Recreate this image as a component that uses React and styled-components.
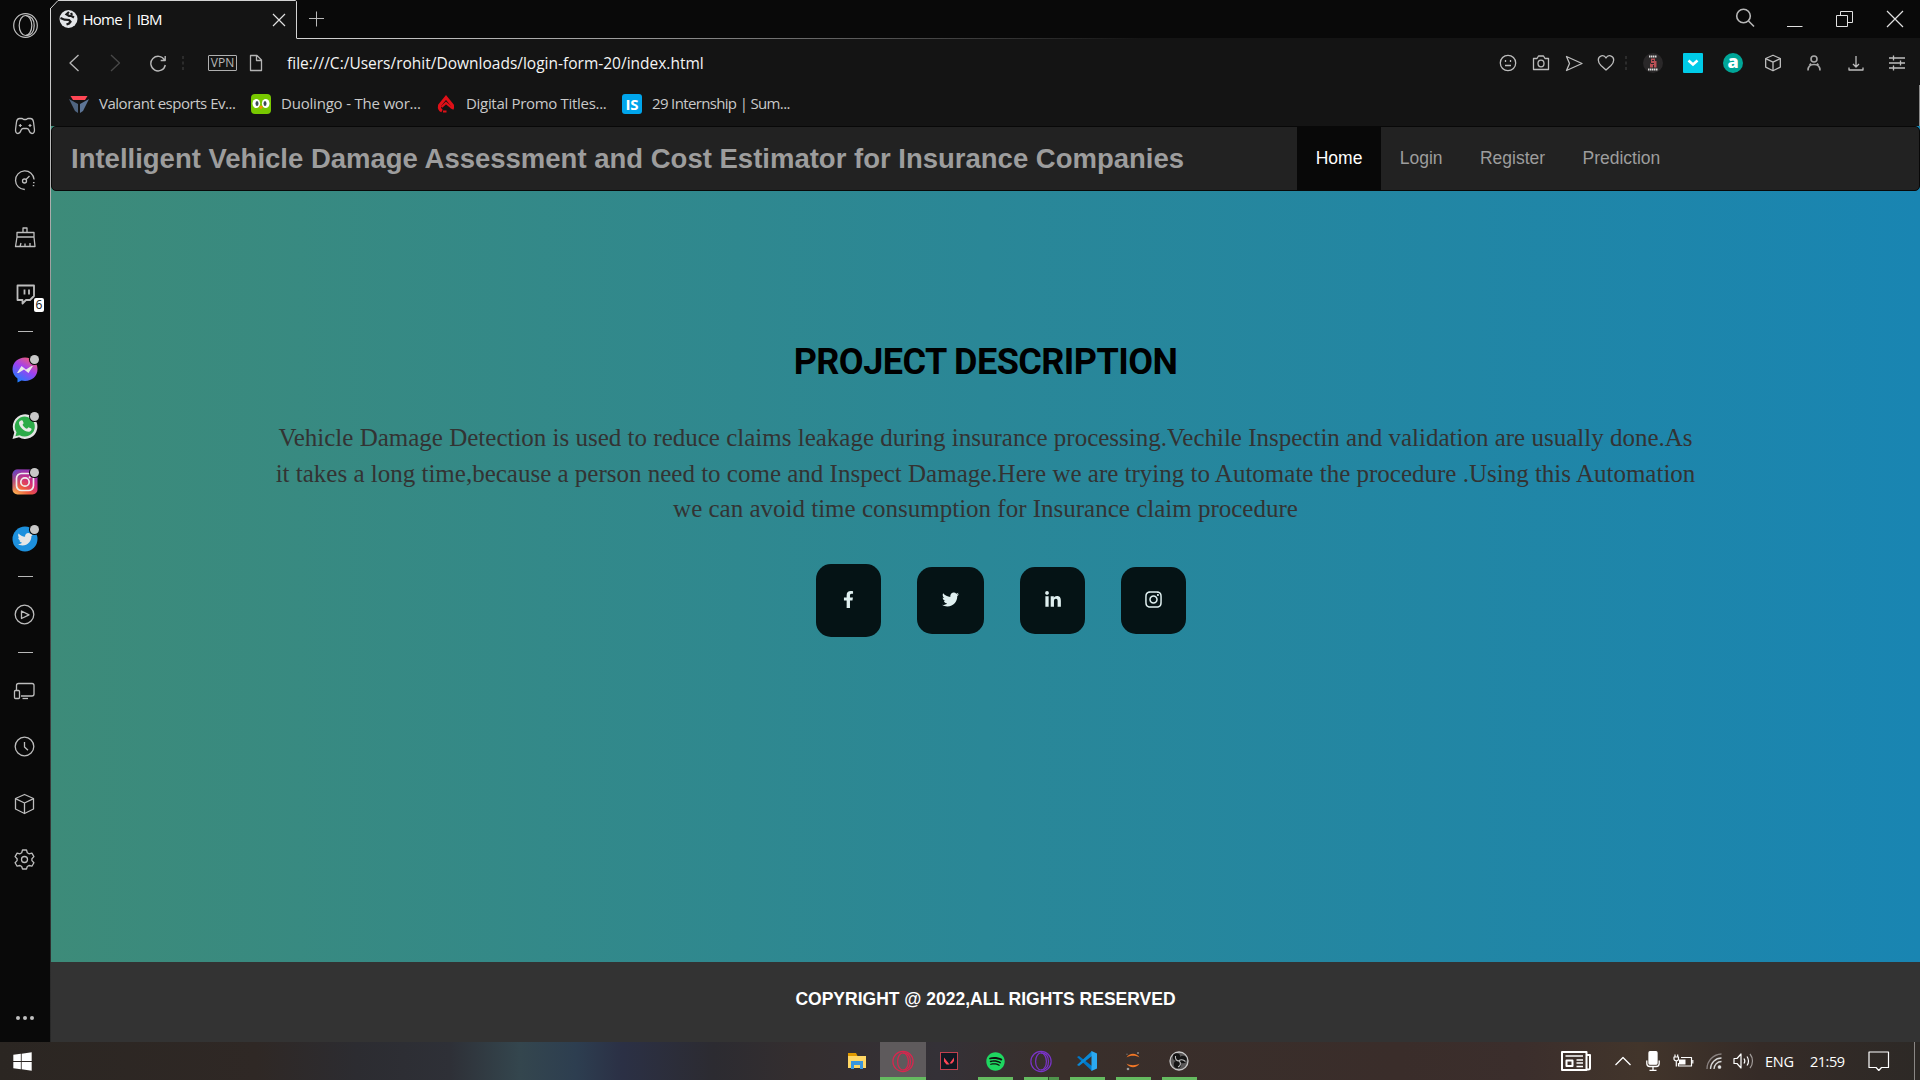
import React from "react";
import styled, { createGlobalStyle } from "styled-components";
import {
  FaFacebookF,
  FaTwitter,
  FaLinkedinIn,
  FaInstagram,
  FaSpotify,
  FaWindows,
} from "react-icons/fa";

const GlobalStyle = createGlobalStyle`
  * { box-sizing: border-box; }
  body { margin: 0; background: #090909; overflow: hidden; }
`;

const ui = `"Open Sans", "Noto Sans", sans-serif`;

const Desktop = styled.div`
  width: 1920px;
  height: 1080px;
  display: flex;
  flex-direction: column;
  overflow: hidden;
  background: #090909;
  font-family: ${ui};
`;

const Browser = styled.div`
  height: 1042px;
  display: flex;
`;

const Sidebar = styled.aside`
  width: 50px;
  flex: none;
  display: flex;
  flex-direction: column;
  align-items: center;
  background: #090909;
`;

const SideItem = styled.div`
  position: relative;
  width: 50px;
  height: 28px;
  flex: none;
  margin-top: ${(p) => p.$gap}px;
  display: flex;
  justify-content: center;
`;

const SideRule = styled.div`
  width: 15px;
  height: 1px;
  flex: none;
  margin: ${(p) => p.$gap}px 0 0 1px;
  background: #b8b8b8;
`;

const Count = styled.span`
  position: absolute;
  left: 34px;
  top: 18px;
  width: 10px;
  height: 14px;
  border-radius: 2px;
  background: #fff;
  color: #111;
  font: 12px/14px ${ui};
  text-align: center;
`;

const Dot = styled.span`
  position: absolute;
  left: 30px;
  top: 0;
  width: 9px;
  height: 9px;
  border-radius: 50%;
  background: #c8c8c8;
  box-shadow: 0 0 0 1px #090909;
`;

const Edge = styled.div`
  width: 1px;
  flex: none;
  margin-top: 8px;
  background: linear-gradient(180deg, #d8d8d8, #a0a0a0 25%, #484848 55%, #282828);
`;

const Main = styled.div`
  flex: 1;
  min-width: 0;
  display: flex;
  flex-direction: column;
`;

const TabStrip = styled.div`
  height: 39px;
  display: flex;
  align-items: stretch;
  background: #090909;
`;

const Tab = styled.div`
  position: relative;
  width: 246px;
  display: flex;
  align-items: center;
  padding: 0 11px 0 8px;
  background: linear-gradient(135deg, #090909 5px, #141414 5px);
`;

const TabOutline = styled.svg`
  position: absolute;
  left: -1px;
  top: 0;
`;

const TabTitle = styled.span`
  flex: 1;
  margin: 0 0 2px 4.5px;
  color: #fff;
  font-size: 15px;
  line-height: 20px;
  letter-spacing: -0.75px;
  word-spacing: 0.5px;
  white-space: nowrap;
`;

const TabRest = styled.div`
  flex: 1;
  display: flex;
  justify-content: space-between;
  padding-left: 12px;
  border-bottom: 1px solid;
  border-image: linear-gradient(90deg, #d4d4d4, #9c9c9c 20%, #4a4a4a 38%, #141414 52%) 1;
`;

const WindowControls = styled.div`
  display: flex;
  gap: 18px;
  padding: 2px 9px 0 0;
`;

const Toolbar = styled.div`
  height: 46px;
  display: flex;
  align-items: center;
  padding: 1px 0 0 12px;
  background: #141414;
`;

const Slot = styled.div`
  width: ${(p) => p.$w}px;
  margin-left: ${(p) => p.$ml || 0}px;
  flex: none;
  display: flex;
  justify-content: center;
  align-items: center;
`;

const Vpn = styled.span`
  width: 29px;
  height: 16px;
  margin: 0 12px 0 15px;
  border: 1px solid #b0b0b0;
  border-radius: 1px;
  color: #b8b8b8;
  font: 12px/14px ${ui};
  text-align: center;
`;

const Address = styled.span`
  flex: 1;
  margin-left: 24px;
  color: #f4f4f4;
  font-size: 15.500px;
  line-height: 20px;
  white-space: nowrap;
`;

const Tools = styled.div`
  display: flex;
  align-items: center;
`;

const Avatar = styled.span`
  width: 20px;
  height: 20px;
  border-radius: 50%;
  background: #2a2829;
  display: flex;
`;

const LetterA = styled.span`
  width: 20px;
  height: 20px;
  border-radius: 50%;
  background: #00a698;
  color: #fff;
  font: 800 18px/16px ${ui};
  text-align: center;
`;

const Bookmarks = styled.div`
  height: 41px;
  display: flex;
  padding: 0 0 3px 18px;
  background: #141414;
  border-right: 1px solid #8a8a8a;
`;

const Bookmark = styled.div`
  width: ${(p) => p.$w}px;
  display: flex;
  align-items: center;
  gap: 10px;
  color: #c9c9c9;
  font-size: 15px;
  letter-spacing: ${(p) => p.$ls}px;
  white-space: nowrap;
`;

const BookmarkName = styled.span`
  line-height: 20px;
  margin-bottom: 2px;
`;

const IsLogo = styled.span`
  width: 20px;
  height: 20px;
  border-radius: 3px;
  background: #00a5ec;
  color: #fff;
  font: 700 15px/20px ${ui};
  letter-spacing: 0;
  text-align: center;
`;

const Page = styled.div`
  flex: 1;
  display: flex;
  flex-direction: column;
  background: linear-gradient(90deg, #3d8b79, #2a8797 50%, #1985b2);
`;

const NavBar = styled.nav`
  height: 65px;
  flex: none;
  display: flex;
  border: 1px solid #080808;
  border-radius: 5px;
  background: #222;
  font-family: "Liberation Sans", Arial, sans-serif;
`;

const Brand = styled.span`
  width: 1245px;
  padding-left: 19px;
  color: #9d9d9d;
  font-weight: 700;
  font-size: 27.5px;
  line-height: 64px;
  white-space: nowrap;
`;

const NavLink = styled.a`
  padding: 0 18.7px;
  background: ${(p) => (p.$active ? "#080808" : "transparent")};
  color: ${(p) => (p.$active ? "#fff" : "#9d9d9d")};
  font-size: 17.5px;
  line-height: 62px;
`;

const Hero = styled.section`
  flex: 1;
  display: flex;
  flex-direction: column;
  align-items: center;
  padding-top: 151px;
`;

const Heading = styled.h1`
  margin: 0;
  color: #000;
  font: 700 36px/40px Roboto, sans-serif;
  letter-spacing: -0.55px;
`;

const Description = styled.p`
  margin: 38px 0 0;
  color: #333;
  font: 25px/35.7px "Liberation Serif", "Times New Roman", serif;
  text-align: center;
  white-space: nowrap;
`;

const Socials = styled.div`
  display: flex;
  align-items: center;
  gap: 36px;
  margin: 37px 0 0 31px;
`;

const Social = styled.a`
  width: ${(p) => p.$w || 65}px;
  height: ${(p) => p.$h || 67}px;
  padding-bottom: 2px;
  display: flex;
  justify-content: center;
  align-items: center;
  border-radius: 15px;
  background: #051315;
  color: #e0f0f0;
`;

const Footer = styled.footer`
  height: 80px;
  padding-top: 27px;
  background: #333;
  color: #fff;
  font: 700 17.5px/20px "Liberation Sans", Arial, sans-serif;
  text-align: center;
`;

const Taskbar = styled.div`
  height: 38px;
  display: flex;
  justify-content: space-between;
  background: linear-gradient(
    90deg,
    #2b2622 0px,
    #2f2825 255px,
    #2c2c31 357px,
    #2e3037 450px,
    #34464e 520px,
    #2d3e50 576px,
    #2b3045 622px,
    #2c2b31 714px,
    #342e2f 800px,
    #343137 940px,
    #392f2b 1060px,
    #3a2d2a 1400px,
    #3b2e2c 1520px,
    #42352b 1640px,
    #352b27 1760px,
    #2d2926 1920px
  );
`;

const Start = styled.div`
  width: 834px;
  padding: 9px 0 0 12px;
  color: #fff;
`;

const Apps = styled.div`
  flex: 1;
  display: flex;
`;

const TaskButton = styled.div`
  width: 46px;
  height: 38px;
  display: flex;
  flex-direction: column;
  align-items: center;
  justify-content: space-between;
  background: ${(p) => (p.$active ? "#5e5a5c" : "transparent")};
`;

const AppIcon = styled.div`
  height: 35px;
  display: flex;
  align-items: center;
  padding-top: 3px;
`;

const Running = styled.div`
  width: ${(p) => p.$w}px;
  height: 3px;
  background: ${(p) =>
    p.$split
      ? "linear-gradient(90deg, #65bb60 24px, #2f4a2c 24px 25px, #4f934b 25px)"
      : "#65bb60"};
`;

const Tray = styled.div`
  display: flex;
  align-items: center;
  padding-right: 5px;
  color: #fff;
  font-size: 14.5px;
`;

const TrayText = styled.span`
  width: ${(p) => p.$w}px;
  letter-spacing: ${(p) => p.$ls}px;
  white-space: nowrap;
`;

const ShowDesktop = styled.div`
  width: 1px;
  height: 38px;
  margin-left: 24px;
  background: #8a8785;
`;

const Glyph = styled.svg`
  flex: none;
  fill: none;
  stroke-linejoin: round;
`;

function Line({ size = 28, w, h, box, color = "#bdbdbd", sw = 1.3, children }) {
  const W = w || size;
  const H = h || size;
  return (
    <Glyph width={W} height={H} viewBox={box || `0 0 ${W} ${H}`} stroke={color} strokeWidth={sw}>
      {children}
    </Glyph>
  );
}

function OperaRing({ size = 28, color, sw, box = "0 0 28 28" }) {
  return (
    <Line w={size} h={size} box={box} color={color} sw={sw}>
      <circle cx="14" cy="14.5" r="11.8" />
      <ellipse cx="14" cy="14.5" rx="6.3" ry="10" />
      <path d="M14 4.500c6 0 8.700 4 8.700 10s-2.700 10-8.700 10" />
    </Line>
  );
}

function Grip() {
  return (
    <svg width="3" height="14" fill="#2c2c2c">
      <rect width="2" height="3" />
      <rect y="5.500" width="2" height="3" />
      <rect y="11" width="2" height="3" />
    </svg>
  );
}

const Cube = () => (
  <>
    <path d="M14 4.500l9 4v10.500l-9 4.500l-9-4.500v-10.500z" />
    <path d="M5 8.700l9 4.300l9-4.300M14 13v10.500" />
  </>
);

function SidePanel() {
  return (
    <Sidebar>
      <SideItem $gap={11}>
        <OperaRing color="#c0c0c0" sw={1.2} box="-0.500 0 28 28" />
      </SideItem>
      <SideItem $gap={73}>
        <Line>
          <path d="M8.500 6.500h2.500c1 0 1 1 2 1h2c1 0 1-1 2-1h2.500c2 0 2.700 1.500 3 3.500l.9 7c.3 2.500-.4 4.500-2.400 4.500s-2.500-1.500-3.200-3.500c-.5-1.300-1-1.500-2-1.500h-3.600c-1 0-1.500.2-2 1.500c-.7 2-1.200 3.500-3.200 3.500s-2.700-2-2.400-4.500l.9-7c.3-2 1-3.500 3-3.500z" />
          <path d="M9.300 12v3M7.800 13.500h3M19 12v3M17.500 13.500h3" strokeWidth="1.200" />
        </Line>
      </SideItem>
      <SideItem $gap={26}>
        <Line>
          <path d="M13.800 23.500a9.300 9.300 0 1 1 9.300-10" />
          <path d="M22.800 16v1.200M22.500 19v1.200" strokeWidth="1.500" />
          <circle cx="13.500" cy="15" r="2" />
          <path d="M15 13.500l3.500-3.500" />
        </Line>
      </SideItem>
      <SideItem $gap={29}>
        <Line>
          <path d="M12 9.500v-4.500h4v4.500M6 9.500h17v4.500h-17zM6 14l-1.500 9.500h19.500l-1-9.500M9 23.500l1-3.500M14 23.500v-3M19 23.500v-3.500" />
        </Line>
      </SideItem>
      <SideItem $gap={29}>
        <Line sw={1.8}>
          <path d="M6.500 5.500h16.500v10.500l-4 4h-4l-3.500 3.500v-3.500h-5z" />
          <path d="M13.500 9.500v5M18 9.500v5" />
        </Line>
        <Count>6</Count>
      </SideItem>
      <SideRule $gap={23} />
      <SideItem $gap={23}>
        <svg width="28" height="28" viewBox="0 0 28 28">
          <defs>
            <linearGradient id="msg" x1="0.800" y1="0" x2="0.200" y2="1">
              <stop offset="0" stopColor="#f9616a" />
              <stop offset="0.450" stopColor="#a040f0" />
              <stop offset="1" stopColor="#1283ff" />
            </linearGradient>
          </defs>
          <path fill="url(#msg)" d="M14 2.500c7 0 12.500 5 12.500 11.800s-5.500 11.700-12.500 11.700c-1.500 0-2.500-.2-3.500-.5l-4 2v-4c-3-2-5-5.300-5-9.200c0-6.800 5.500-11.800 12.500-11.800z" />
          <path fill="#e8e8e8" d="M6 18l4.500-7l4.500 3.500l5.500-3.500h1.500l-4.500 7l-4.500-3.500l-5.500 3.500z" />
        </svg>
        <Dot />
      </SideItem>
      <SideItem $gap={29}>
        <svg width="28" height="28" viewBox="0 0 28 28">
          <path fill="#e4e4e4" d="M1.500 27l1.800-6.500a12.300 12.300 0 1 1 4.700 4.800z" />
          <path fill="#2cab49" d="M4.400 24.200l1.100-4a10 10 0 1 1 3.200 3z" />
          <path fill="#e8e8e8" d="M10.200 8.500c.8-.5 1.500 0 1.700.8l.7 1.800c.1.700-1 1.400-1 1.800c1.200 2 2.400 3 4.300 3.800c.7 0 1.200-1.600 2-1.300l2.400 1.200c.6.500.2 2.700-2 3.200c-4.500.5-10.500-5-10.300-9c.1-1.200 1-2 2.200-2.300z" />
        </svg>
        <Dot />
      </SideItem>
      <SideItem $gap={28}>
        <svg width="28" height="28" viewBox="0 0 28 28">
          <defs>
            <linearGradient id="ig" x1="0" y1="1" x2="0.900" y2="0">
              <stop offset="0" stopColor="#fdc35a" />
              <stop offset="0.350" stopColor="#ee5a3c" />
              <stop offset="0.650" stopColor="#d02a80" />
              <stop offset="1" stopColor="#7a3ac8" />
            </linearGradient>
            <linearGradient id="ig2" x1="0" y1="0" x2="0.500" y2="0.500">
              <stop offset="0" stopColor="#4050d0" />
              <stop offset="1" stopColor="#a030c0" stopOpacity="0" />
            </linearGradient>
          </defs>
          <rect x="1.500" y="1.500" width="25" height="25" rx="5" fill="url(#ig)" />
          <rect x="1.500" y="1.500" width="25" height="25" rx="5" fill="url(#ig2)" />
          <rect x="5.500" y="5.500" width="17" height="17" rx="5" fill="none" stroke="#eee" strokeWidth="1.700" />
          <circle cx="14" cy="14" r="4.200" fill="none" stroke="#eee" strokeWidth="1.700" />
          <circle cx="18.700" cy="9.300" r="1.100" fill="#eee" />
        </svg>
        <Dot />
      </SideItem>
      <SideItem $gap={29}>
        <svg width="28" height="28" viewBox="0 0 28 28">
          <circle cx="14" cy="14" r="12.500" fill="#1d90dd" />
          <FaTwitter x="6.500" y="6.500" size={15.5} color="#e6e6e6" />
        </svg>
        <Dot />
      </SideItem>
      <SideRule $gap={23} />
      <SideItem $gap={23}>
        <Line>
          <circle cx="13.500" cy="14.500" r="9.300" />
          <path d="M10.500 11v7.500l7.500-3.700z" />
        </Line>
      </SideItem>
      <SideRule $gap={24} />
      <SideItem $gap={24}>
        <Line>
          <path d="M5.500 13v-4.500c0-1.300.7-2 2-2h13.500c1.300 0 2 .7 2 2v8.500c0 1.300-.7 2-2 2h-11" />
          <rect x="3.500" y="13.500" width="5" height="8" rx="1" />
          <path d="M11.500 21.500h5.500" />
        </Line>
      </SideItem>
      <SideItem $gap={27}>
        <Line>
          <circle cx="13.500" cy="14.500" r="9.300" />
          <path d="M13.500 10v5l3.500 3.200" />
        </Line>
      </SideItem>
      <SideItem $gap={30}>
        <Line box="0.500 0 28 28">
          <Cube />
        </Line>
      </SideItem>
      <SideItem $gap={27}>
        <Line>
          <path d="M11.500 5h4l.8 2.800l1.700 1l2.900-.7l2 3.500l-2 2.100v1.900l2 2.100l-2 3.500l-2.900-.7l-1.700 1l-.8 2.500h-4l-.8-2.500l-1.700-1l-2.900.7l-2-3.500l2-2.100v-1.900l-2-2.100l2-3.500l2.900.7l1.700-1z" />
          <circle cx="13.500" cy="14.500" r="3" />
        </Line>
      </SideItem>
      <SideItem $gap={131}>
        <svg width="28" height="28" fill="#c0c0c0">
          <circle cx="7" cy="14" r="2" />
          <circle cx="14" cy="14" r="2" />
          <circle cx="21" cy="14" r="2" />
        </svg>
      </SideItem>
    </Sidebar>
  );
}

function Tabs() {
  return (
    <TabStrip>
      <Tab>
        <TabOutline width="248" height="39" fill="none" stroke="#d4d4d4">
          <path d="M.5 8.500L8 .5H245.500L246.500 1.500V38.500" />
        </TabOutline>
        <svg width="19" height="19" viewBox="0 0 19 19">
          <circle cx="9.500" cy="9" r="9" fill="#e3e5e8" />
          <path fill="none" stroke="#1a1a1a" strokeWidth="2.200" d="M10 2l-2.500 2.300l2.500 1.500l2.500.2l2.500 1.500M1.500 8l4 1.700l4.500.3l1.500 1.800l-1.500 1.700l-2.500 1M13.500 3.500l-2 1" />
        </svg>
        <TabTitle>Home | IBM</TabTitle>
        <Line size={14} color="#e0e0e0" sw={1.2}>
          <path d="M1 1l12 12M13 1l-12 12" />
        </Line>
      </Tab>
      <TabRest>
        <Line w={15} h={38} color="#b8b8b8" sw={1}>
          <path d="M7.500 11.500v15M0 18.500h15" />
        </Line>
        <WindowControls>
          <Line w={32} h={32} color="#b8b8b8" sw={1.6}>
            <circle cx="14.500" cy="14" r="6.800" />
            <path d="M19.500 19l5.500 5.500" />
          </Line>
          <Line w={32} h={32} color="#e0e0e0" sw={1}>
            <path d="M8 24.500h15.500" />
          </Line>
          <Line w={32} h={32} color="#e0e0e0" sw={1}>
            <path d="M7.500 13.500h11v11h-11zM11.500 13.500v-4h12v11h-5" />
          </Line>
          <Line w={32} h={32} color="#e0e0e0" sw={1.2}>
            <path d="M8 9l16 16M24 9l-16 16" />
          </Line>
        </WindowControls>
      </TabRest>
    </TabStrip>
  );
}

function AddressBar() {
  return (
    <Toolbar>
      <Slot $w={24}>
        <Line w={18} h={18} color="#b8b8b8">
          <path d="M12.500 1l-8.500 8l8.500 8" />
        </Line>
      </Slot>
      <Slot $w={56}>
        <Line w={18} h={18} color="#484848">
          <path d="M5 1l8.500 8l-8.500 8" />
        </Line>
      </Slot>
      <Slot $w={30}>
        <Line w={18} h={18} color="#b8b8b8" sw={1.4}>
          <path d="M15.500 6a7.300 7.300 0 1 0 .8 5M16.200 2v4.500h-4.500" />
        </Line>
      </Slot>
      <Slot $w={20}>
        <Grip />
      </Slot>
      <Vpn>VPN</Vpn>
      <Line w={14} h={18} color="#b4b4b4">
        <path d="M1.500 1.500h6.500l4.500 4.500v10.500h-11zM7.500 1.500v5h5" />
      </Line>
      <Address>file:///C:/Users/rohit/Downloads/login-form-20/index.html</Address>
      <Tools>
        <Slot $w={33}>
          <Line size={18}>
            <circle cx="9" cy="9" r="7.700" />
            <path d="M6.500 6v2M11.500 6v2M6 11.500h6" />
          </Line>
        </Slot>
        <Slot $w={33}>
          <Line size={18}>
            <path d="M1.500 4.500h3.500l1.500-2.500h5l1.500 2.500h3.500v11h-15z" />
            <ellipse cx="9" cy="9.500" rx="3" ry="3.300" />
          </Line>
        </Slot>
        <Slot $w={33}>
          <Line size={18}>
            <path d="M1.500 2.500l15.500 7l-15.500 7l3-7z" />
          </Line>
        </Slot>
        <Slot $w={31}>
          <Line size={18}>
            <path d="M9 16l-5-4.500c-2-2-2.700-3.500-2.700-5.500c0-4.500 5.700-6 7.700-2c2-4 7.700-2.500 7.700 2c0 2-.7 3.500-2.700 5.500z" />
          </Line>
        </Slot>
        <Slot $w={10}>
          <Grip />
        </Slot>
        <Slot $w={44}>
          <Avatar>
            <svg width="20" height="20">
              <path stroke="#ddd" strokeWidth="1.800" d="M6 3.500h8M5 16.500h10" strokeDasharray="1.500 .5" />
              <path fill="#b85055" d="M8 5.500h4v2.500h1.500v6.500h-2.500v-2.500h-1v2.500h-3v-4h1z" />
              <path stroke="#2a2829" d="M9 7.500h2M8 10.500h3" />
            </svg>
          </Avatar>
        </Slot>
        <Slot $w={36}>
          <svg width="20" height="20">
            <rect width="20" height="20" rx="1" fill="#00cbe8" />
            <path d="M5.500 7.500l4.500 4l4.500-4" fill="none" stroke="#fff" strokeWidth="2.600" />
          </svg>
        </Slot>
        <Slot $w={44}>
          <LetterA>a</LetterA>
        </Slot>
        <Slot $w={36}>
          <Line w={22} h={22} box="0.500 0.500 27 27" sw={1.6}>
            <Cube />
          </Line>
        </Slot>
        <Slot $w={46}>
          <Line size={18} color="#a8a8a8" sw={1.6}>
            <circle cx="9" cy="5" r="3" />
            <path d="M3 16.500c0-4 2-6 6-6s6 2 6 6M6 9.500l-1.500 1.500M12 9.500l1.500 1.500" />
          </Line>
        </Slot>
        <Slot $w={37}>
          <Line size={18}>
            <path d="M9 2v10.500M6 10l3 3l3-3M2 13.500v2.500h14v-2.500" />
          </Line>
        </Slot>
        <Slot $w={46}>
          <Line size={18}>
            <path d="M1 4h16M1 9h16M1 14h16M5.500 1.500v5M12.500 6.500v5M5.500 11.500v5" />
          </Line>
        </Slot>
      </Tools>
    </Toolbar>
  );
}

function BookmarkBar() {
  return (
    <Bookmarks>
      <Bookmark $w={182} $ls={-0.48}>
        <svg width="20" height="20">
          <path fill="#ff4654" d="M1.500 2h17l-2.500 4h-12z" />
          <path fill="#4f6480" d="M0 5l9 5v9l-3-2z" />
          <path fill="#5d7596" d="M20 5l-9 5v9l3-2z" />
        </svg>
        <BookmarkName>Valorant esports Ev...</BookmarkName>
      </Bookmark>
      <Bookmark $w={185} $ls={-0.2}>
        <svg width="20" height="20">
          <rect width="20" height="20" rx="4" fill="#78c800" />
          <ellipse cx="5.300" cy="9.500" rx="3.800" ry="4.600" fill="#fff" />
          <ellipse cx="14.700" cy="9.500" rx="3.800" ry="4.600" fill="#fff" />
          <ellipse cx="6" cy="9.500" rx="1.500" ry="2.500" fill="#3c4a55" />
          <ellipse cx="14" cy="9.500" rx="1.500" ry="2.500" fill="#3c4a55" />
          <path fill="#f49000" d="M8 12.500l2-1l2 1l-2 3z" />
        </svg>
        <BookmarkName>Duolingo - The wor...</BookmarkName>
      </Bookmark>
      <Bookmark $w={186} $ls={-0.31}>
        <svg width="20" height="20" fill="none" stroke="#e01018" strokeWidth="3">
          <path d="M6 17c-2-1-3-3-2.500-5.500l6.500-8l6.500 8c.3 1.500 0 2.500-.5 3.500" />
          <path d="M5.500 13l4.500-4l6 5M7 17.500h3.500" strokeWidth="2.200" />
        </svg>
        <BookmarkName>Digital Promo Titles...</BookmarkName>
      </Bookmark>
      <Bookmark $w={200} $ls={-0.65}>
        <IsLogo>IS</IsLogo>
        <BookmarkName>29 Internship | Sum...</BookmarkName>
      </Bookmark>
    </Bookmarks>
  );
}

function WebPage() {
  return (
    <Page>
      <NavBar>
        <Brand>Intelligent Vehicle Damage Assessment and Cost Estimator for Insurance Companies</Brand>
        <NavLink $active>Home</NavLink>
        <NavLink>Login</NavLink>
        <NavLink>Register</NavLink>
        <NavLink>Prediction</NavLink>
      </NavBar>
      <Hero>
        <Heading>PROJECT DESCRIPTION</Heading>
        <Description>
          Vehicle Damage Detection is used to reduce claims leakage during insurance processing.Vechile Inspectin and validation are usually done.As
          <br />
          it takes a long time,because a person need to come and Inspect Damage.Here we are trying to Automate the procedure .Using this Automation
          <br />
          we can avoid time consumption for Insurance claim procedure
        </Description>
        <Socials>
          <Social $h={73}>
            <FaFacebookF size={17} />
          </Social>
          <Social $w={67}>
            <FaTwitter size={17} />
          </Social>
          <Social>
            <FaLinkedinIn size={18} />
          </Social>
          <Social>
            <FaInstagram size={19} />
          </Social>
        </Socials>
      </Hero>
      <Footer>COPYRIGHT @ 2022,ALL RIGHTS RESERVED</Footer>
    </Page>
  );
}

function BottomBar() {
  return (
    <Taskbar>
      <Start>
        <FaWindows size={21} />
      </Start>
      <Apps>
        <TaskButton>
          <AppIcon>
            <svg width="18" height="17">
              <path fill="#e09a00" d="M0 0h8l1.500 3h-9.500z" />
              <path fill="#ffd765" d="M0 3h18v12h-18z" />
              <path fill="#3a96dd" d="M3 8h12v8h-3v-4h-6v4h-3z" />
            </svg>
          </AppIcon>
        </TaskButton>
        <TaskButton $active>
          <AppIcon>
            <OperaRing size={24} color="#d8264e" sw={1.4} />
          </AppIcon>
          <Running $w={46} />
        </TaskButton>
        <TaskButton>
          <AppIcon>
            <svg width="18" height="18">
              <rect x=".5" y=".5" width="17" height="17" fill="#101822" stroke="#c0404e" />
              <path fill="#ff4656" d="M4 5.500l5.500 7h-3l-2.500-3zM14 5.500v3.500l-2 2.500h-2.500z" />
            </svg>
          </AppIcon>
        </TaskButton>
        <TaskButton>
          <AppIcon>
            <svg width="19" height="19">
              <circle cx="9.500" cy="9.500" r="8" fill="#101010" />
              <FaSpotify size={19} color="#1ed760" />
            </svg>
          </AppIcon>
          <Running $w={35} />
        </TaskButton>
        <TaskButton>
          <AppIcon>
            <OperaRing size={24} color="#7a34c8" sw={1.4} />
          </AppIcon>
          <Running $w={35} $split />
        </TaskButton>
        <TaskButton>
          <AppIcon>
            <svg width="20" height="20">
              <path fill="#0078c8" d="M0 6l2-1l13 10v5z" />
              <path fill="#0a8ad8" d="M0 14l2 1l13-10v-5z" />
              <path fill="#2ba8f0" d="M14.500 0l5.500 2.500v15l-5.500 2.500z" />
            </svg>
          </AppIcon>
          <Running $w={35} />
        </TaskButton>
        <TaskButton>
          <AppIcon>
            <svg width="16" height="20">
              <path fill="#f37726" d="M1.500 6.500c3-5 10-5 13 0c-3-2.300-10-2.300-13 0zM1.500 12.500c3 5 10 5 13 0c-3 2.300-10 2.300-13 0z" />
              <circle cx="13" cy="2" r="1" fill="#8a8a8a" />
              <circle cx="3" cy="18" r="1.300" fill="#9a9a9a" />
              <circle cx="2" cy="3.200" r=".7" fill="#777" />
            </svg>
          </AppIcon>
          <Running $w={35} />
        </TaskButton>
        <TaskButton>
          <AppIcon>
            <svg width="20" height="20">
              <circle cx="10" cy="10" r="9" fill="#5a5858" stroke="#c8c8c8" strokeWidth="1.300" />
              <circle cx="7.500" cy="6" r="3.700" fill="#141414" />
              <circle cx="14" cy="8.500" r="3.700" fill="#141414" />
              <circle cx="8.500" cy="13.500" r="3.700" fill="#141414" />
              <path fill="none" stroke="#c0c0c0" strokeWidth="1.100" d="M6.500 5c-.5 3 1 5 3.500 5M16.500 10.500c-2.500-2.500-5.500-2-6.500-.5M9 16c2.500-1 3.500-4 1-6" />
            </svg>
          </AppIcon>
          <Running $w={35} />
        </TaskButton>
      </Apps>
      <Tray>
        <Slot $w={30}>
          <Line w={30} h={20} color="#fff" sw={2}>
            <path d="M1 1h24.500v18h-24.500zM25.500 4h3.500v13c0 2-3.500 2-3.500 0" />
            <path d="M4.500 5h17.500M15.500 9h6.500M15.500 12h6.500M15.500 15.500h6.500" strokeWidth="1.500" />
            <path d="M5.500 9.500h6v5.500h-6z" />
          </Line>
        </Slot>
        <Slot $w={46} $ml={9}>
          <Line w={18} h={10} color="#fff" sw={1.3}>
            <path d="M1.500 9l7.500-7.500l7.500 7.500" />
          </Line>
        </Slot>
        <Line w={14} h={20} color="#fff" sw={1.3}>
          <rect x="3" y=".7" width="8" height="12.500" rx="1" fill="#fff" />
          <path d="M.8 9.500v3c0 2 1 3 3 3h6.400c2 0 3-1 3-3v-3M7 15.500v3.500M3.500 19.300h7" />
        </Line>
        <Slot $w={46}>
          <Line w={21} h={14} color="#fff" sw={1.2}>
            <path d="M8 3.500h10.500v8.500h-13v-3" />
            <path d="M19.800 6v3.500" />
            <path d="M6 5.500h6.500v5h-6.500z" fill="#fff" stroke="none" />
            <path d="M1 3h4.500v2c0 1-1 1.800-2.200 1.800s-2.300-.8-2.300-1.800zM2 .5v2.500M4.700 .5v2.500M3.300 7v5.500" />
          </Line>
        </Slot>
        <Line w={16} h={16} color="#d8d8d8" sw={1.3}>
          <path d="M1 16a15 15 0 0 1 14.500-15" stroke="#8a8280" />
          <path d="M4.500 16a11 11 0 0 1 11-11M8 16a7.500 7.500 0 0 1 7.500-7.500" />
          <circle cx="13.500" cy="14" r="1.200" fill="#fff" />
        </Line>
        <Slot $w={43}>
          <Line w={21} h={16} color="#fff" sw={1.2}>
            <path d="M1 5.500h3l4-4.500v14l-4-4.500h-3z" />
            <path d="M11 5.500c1 1.500 1 3.500 0 5M14 3.500c2 2.500 2 6.500 0 9" />
            <path d="M17 1c3.300 4 3.300 10 0 14" stroke="#a09a98" />
          </Line>
        </Slot>
        <TrayText $w={45} $ls={-0.2}>
          ENG
        </TrayText>
        <TrayText $w={58} $ls={-0.5}>
          21:59
        </TrayText>
        <Line w={22} h={20} color="#fff" sw={1.2}>
          <path d="M1 1h19.500v15.500h-7l-2.700 3l-2.700-3h-7.100z" />
        </Line>
        <ShowDesktop />
      </Tray>
    </Taskbar>
  );
}

export default function App() {
  return (
    <Desktop>
      <GlobalStyle />
      <Browser>
        <SidePanel />
        <Edge />
        <Main>
          <Tabs />
          <AddressBar />
          <BookmarkBar />
          <WebPage />
        </Main>
      </Browser>
      <BottomBar />
    </Desktop>
  );
}
